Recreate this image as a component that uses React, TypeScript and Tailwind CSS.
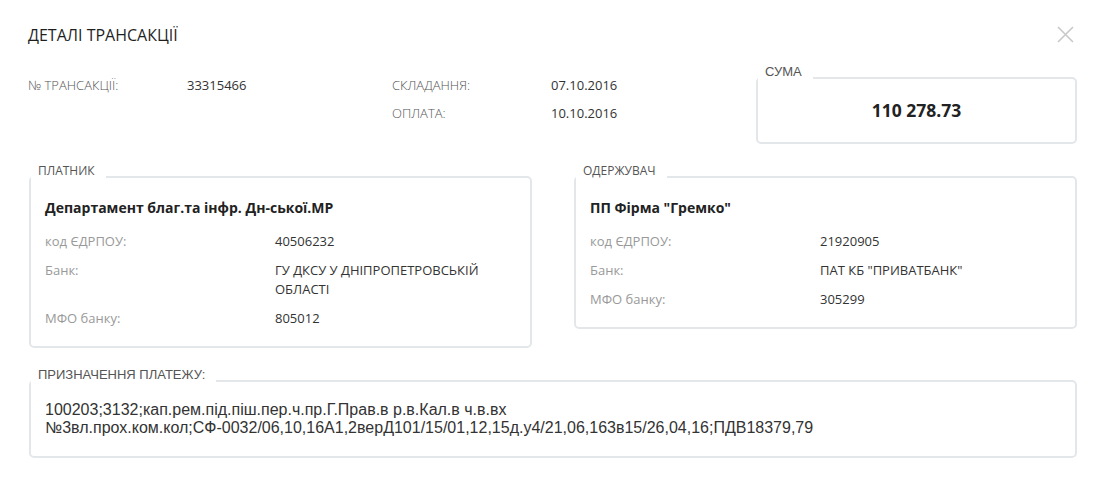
import type { ReactNode } from 'react'

const OPEN = "font-['Open_Sans','Liberation_Sans',sans-serif]"
const ARIAL = "font-['Liberation_Sans',Arial,sans-serif]"

const PAYER = {
  title: 'ПЛАТНИК',
  name: 'Департамент благ.та інфр. Дн-ської.МР',
  rows: [
    { label: 'код ЄДРПОУ:', value: '40506232' },
    { label: 'Банк:', value: 'ГУ ДКСУ У ДНІПРОПЕТРОВСЬКІЙ ОБЛАСТІ' },
    { label: 'МФО банку:', value: '805012' },
  ],
}

const RECEIVER = {
  title: 'ОДЕРЖУВАЧ',
  name: 'ПП Фірма "Гремко"',
  rows: [
    { label: 'код ЄДРПОУ:', value: '21920905' },
    { label: 'Банк:', value: 'ПАТ КБ "ПРИВАТБАНК"' },
    { label: 'МФО банку:', value: '305299' },
  ],
}

function Box({
  label,
  labelFont = OPEN,
  className = '',
  children,
}: {
  label: string
  labelFont?: string
  className?: string
  children: ReactNode
}) {
  return (
    <div className={`relative border-2 border-[#e4e7ea] rounded-[5px] bg-white ${className}`}>
      <span
        className={`absolute left-0 -top-[15px] h-[19px] bg-white pl-[7px] pr-[11px] leading-[16px] text-[#555] ${labelFont}`}
      >
        {label}
      </span>
      {children}
    </div>
  )
}

function PartyBox({ party }: { party: typeof PAYER }) {
  return (
    <Box label={party.title} className="px-[14px] pt-[20px] pb-[18px] text-[12px]">
      <p className="text-[14px] leading-[19px] font-bold text-[#222] mb-[15px]">{party.name}</p>
      <div className="flex flex-col gap-[10px]">
        {party.rows.map((row) => (
          <div key={row.label} className="grid grid-cols-[230px_1fr] text-[13px] leading-[19px]">
            <span className="text-[#999]">{row.label}</span>
            <span className="text-[#333] pr-[10px]">{row.value}</span>
          </div>
        ))}
      </div>
    </Box>
  )
}

export default function App() {
  return (
    <div className={`w-[1104px] h-[481px] bg-white pl-[28px] pr-[27px] pt-[25px] ${OPEN}`}>
      <div className="flex items-center justify-between">
        <h1 className="text-[16px] leading-[20px] text-[#1f1f1f] font-medium">ДЕТАЛІ ТРАНСАКЦІЇ</h1>
        <button className="mr-[3px] mt-[-2px] text-[#c9c9c9]" aria-label="Закрити">
          <svg width="17" height="17" viewBox="0 0 17 17" fill="none" stroke="currentColor" strokeWidth="1.6">
            <path d="M1 1L16 16M16 1L1 16" />
          </svg>
        </button>
      </div>

      <div className="mt-[30px] flex items-start">
        <div className="grid grid-cols-[159px_205px_159px_auto] gap-y-[8px] text-[13px] leading-[20px]">
          <span className="text-[#555] font-light">№ ТРАНСАКЦІЇ:</span>
          <span className="text-[#333]">33315466</span>
          <span className="text-[#555] font-light">СКЛАДАННЯ:</span>
          <span className="text-[#333]">07.10.2016</span>
          <span />
          <span />
          <span className="text-[#555] font-light">ОПЛАТА:</span>
          <span className="text-[#333]">10.10.2016</span>
        </div>
        <Box
          label="СУМА"
          labelFont={`${ARIAL} text-[13px]`}
          className="ml-auto mt-[2px] w-[321px] h-[67px] flex items-center justify-center"
        >
          <span className="text-[17.5px] font-bold text-[#222]">110 278.73</span>
        </Box>
      </div>

      <div className="mt-[32px] ml-px grid grid-cols-2 gap-[42px] items-start">
        <PartyBox party={PAYER} />
        <PartyBox party={RECEIVER} />
      </div>

      <Box
        label="ПРИЗНАЧЕННЯ ПЛАТЕЖУ:"
        labelFont={`${ARIAL} text-[13px]`}
        className="mt-[32px] ml-px px-[14px] pt-[19px] pb-[19px]"
      >
        <p className={`text-[16px] leading-[18px] text-[#333] ${ARIAL}`}>
          100203;3132;кап.рем.під.піш.пер.ч.пр.Г.Прав.в р.в.Кал.в ч.в.вх
          №3вл.прох.ком.кол;СФ-0032/06,10,16А1,2верД101/15/01,12,15д.у4/21,06,163в15/26,04,16;ПДВ18379,79
        </p>
      </Box>
    </div>
  )
}
